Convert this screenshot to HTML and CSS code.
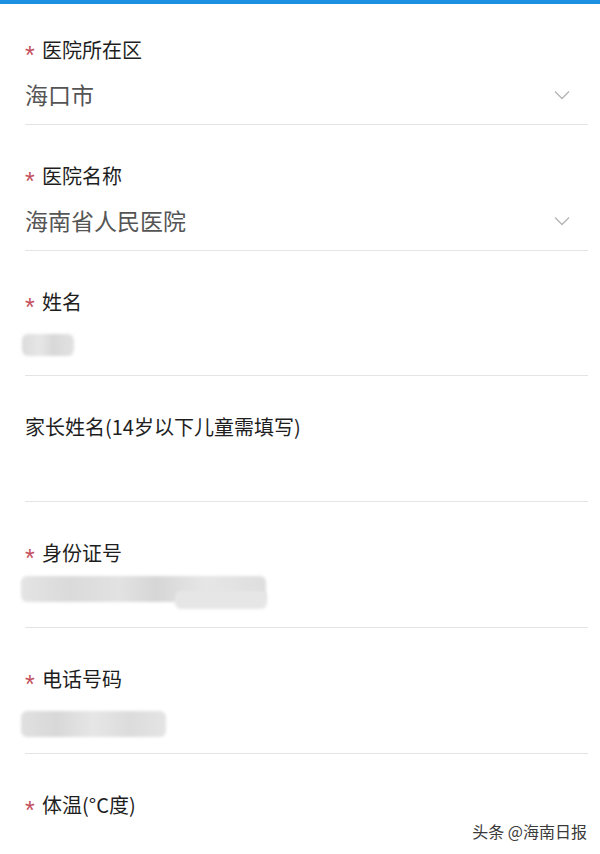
FILE: index.html
```html
<!DOCTYPE html>
<html lang="zh">
<head>
<meta charset="utf-8">
<link rel="stylesheet" href="styles.css">
</head>
<body>
<div class="topbar"></div>
<main class="form">
  <div class="field">
    <div class="label"><span class="req">*</span>医院所在区</div>
    <div class="value select"><span>海口市</span>
      <svg class="chev" width="16" height="10" viewBox="0 0 16 10"><path d="M1 1.5 L8 8.5 L15 1.5" fill="none" stroke="#b4b4b4" stroke-width="1.3"/></svg>
    </div>
  </div>
  <div class="field">
    <div class="label"><span class="req">*</span>医院名称</div>
    <div class="value select"><span>海南省人民医院</span>
      <svg class="chev" width="16" height="10" viewBox="0 0 16 10"><path d="M1 1.5 L8 8.5 L15 1.5" fill="none" stroke="#b4b4b4" stroke-width="1.3"/></svg>
    </div>
  </div>
  <div class="field">
    <div class="label"><span class="req">*</span>姓名</div>
    <div class="value"><div class="blur blur-name"></div></div>
  </div>
  <div class="field">
    <div class="label">家长姓名(14岁以下儿童需填写)</div>
    <div class="value"></div>
  </div>
  <div class="field">
    <div class="label"><span class="req">*</span>身份证号</div>
    <div class="value"><div class="blur blur-id"></div><div class="blur blur-id2"></div></div>
  </div>
  <div class="field">
    <div class="label"><span class="req">*</span>电话号码</div>
    <div class="value"><div class="blur blur-phone"></div></div>
  </div>
  <div class="field last">
    <div class="label"><span class="req">*</span>体温(°C度)</div>
  </div>
</main>
<div class="watermark">头条 @海南日报</div>
</body>
</html>
```

FILE: styles.css
```css
html, body {
  margin: 0;
  padding: 0;
  background: #ffffff;
  font-family: "Noto Sans CJK SC", "Noto Sans", sans-serif;
  width: 600px;
  height: 854px;
  overflow: hidden;
}
.topbar {
  height: 4px;
  background: #1b8fe0;
}
.form {
  padding: 0 12px 0 25px;
}
.field {
  padding: 37px 0 13.8px;
  border-bottom: 1px solid #e4e4e4;
}
.field:first-child {
  padding-top: 32px;
}
.field.last {
  border-bottom: none;
}
.label {
  height: 28px;
  line-height: 28px;
  font-size: 20px;
  color: #1e1e1e;
  display: flex;
  align-items: center;
}
.req {
  color: #c4505e;
  font-family: "Liberation Sans", sans-serif;
  font-size: 25px;
  line-height: 28px;
  width: 17px;
  height: 28px;
  position: relative;
  top: 5px;
}
.value {
  margin-top: 14px;
  height: 32px;
  line-height: 32px;
  font-size: 23px;
  color: #555555;
  display: flex;
  align-items: center;
  position: relative;
}
.select {
  justify-content: space-between;
}
.chev {
  margin-right: 18px;
  position: relative;
  top: 1px;
}
.blur {
  position: absolute;
  filter: blur(1.5px);
  border-radius: 6px;
}
.blur-name {
  left: -3px;
  top: 4px;
  width: 52px;
  height: 22px;
  background: linear-gradient(90deg, #dcdcdc 0%, #e6e6e6 35%, #d8d8d8 60%, #e2e2e2 100%);
}
.blur-id {
  left: -4px;
  top: -5px;
  width: 245px;
  height: 26px;
  background: linear-gradient(90deg, #e4e4e4 0%, #dadada 20%, #e2e2e2 40%, #d6d6d6 55%, #e6e6e6 75%, #dedede 100%);
}
.blur-id2 {
  left: 150px;
  top: 10px;
  width: 92px;
  height: 18px;
  background: #e6e6e6;
}
.blur-phone {
  left: -4px;
  top: 4px;
  width: 145px;
  height: 26px;
  background: linear-gradient(90deg, #e0e0e0 0%, #d8d8d8 25%, #e6e6e6 50%, #dcdcdc 75%, #e4e4e4 100%);
}
.watermark {
  position: absolute;
  right: 13px;
  bottom: 11px;
  font-size: 16px;
  color: #3a3a3a;
  text-shadow: 0 0 1px #fff, 1px 1px 0 #fff;
  letter-spacing: 0;
}
```
